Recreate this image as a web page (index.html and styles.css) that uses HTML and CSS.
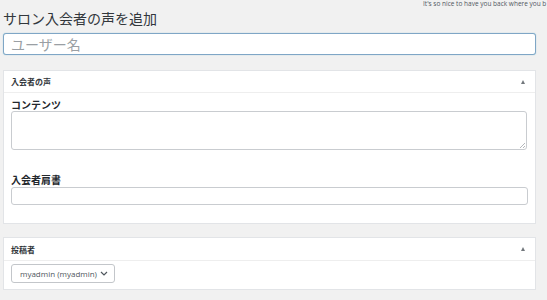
FILE: index.html
```html
<!DOCTYPE html>
<html lang="ja">
<head>
<meta charset="utf-8">
<link rel="stylesheet" href="styles.css">
</head>
<body>
<div class="note">It's so nice to have you back where you b</div>
<h1 class="title">サロン入会者の声を追加</h1>
<div class="name-field"><input class="name-input" type="text" placeholder="ユーザー名"></div>

<section class="panel panel-voice">
  <header class="panel-head">
    <span class="panel-title">入会者の声</span>
    <span class="toggle"></span>
  </header>
  <div class="panel-body">
    <label class="field-label">コンテンツ</label>
    <div class="ta-wrap"><textarea class="ta"></textarea><span class="grip"></span></div>
    <label class="field-label label-gap">入会者肩書</label>
    <input class="text-input" type="text">
  </div>
</section>

<section class="panel panel-author">
  <header class="panel-head">
    <span class="panel-title">投稿者</span>
    <span class="toggle"></span>
  </header>
  <div class="panel-body author-body">
    <div class="select">
      <span class="select-text">myadmin (myadmin)</span>
      <svg class="chev" width="8" height="5" viewBox="0 0 8 5"><path d="M1 1 L4 4 L7 1" fill="none" stroke="#50575e" stroke-width="1.2"/></svg>
    </div>
  </div>
</section>
</body>
</html>
```

FILE: styles.css
```css
* { box-sizing: border-box; }
html, body { margin: 0; padding: 0; }
body {
  background: #f1f1f1;
  font-family: "Noto Sans CJK JP", "Noto Sans", sans-serif;
  color: #23282d;
  padding: 0 11px 0 3px;
  width: 547px;
  height: 300px;
  overflow: hidden;
}
.note {
  font-family: "Open Sans", "Liberation Sans", sans-serif;
  font-size: 6.5px;
  line-height: 7px;
  height: 7px;
  color: #50575e;
  white-space: nowrap;
  padding-left: 420px;
  letter-spacing: 0;
}
.title {
  font-size: 14px;
  font-weight: 400;
  line-height: 20px;
  margin: 1px 0 0 0;
  color: #32373c;
  height: 25px;
}
.name-field { height: 22px; }
.name-input {
  display: block;
  width: 533px;
  height: 22px;
  margin: 0;
  border: 1px solid #7fa6c6;
  border-radius: 3px;
  background: #fff;
  padding: 0 7px;
  font-family: "Noto Sans CJK JP", sans-serif;
  font-size: 14px;
  outline: none;
  box-shadow: 0 0 1px rgba(30,140,190,.5);
}
.name-input::placeholder { color: #9a9fa4; }
.panel {
  background: #fff;
  border: 1px solid #e2e4e7;
  width: 533px;
}
.panel-voice { margin-top: 15px; height: 154px; }
.panel-author { margin-top: 13px; height: 53px; }
.panel-head {
  height: 22px;
  border-bottom: 1px solid #eeeeee;
  display: flex;
  align-items: center;
  justify-content: space-between;
  padding: 0 10px 0 7px;
}
.panel-author .panel-head { height: 23px; }
.panel-title {
  font-size: 8px;
  font-weight: 700;
  color: #32373c;
}
.toggle {
  width: 0; height: 0;
  border-left: 2.5px solid transparent;
  border-right: 2.5px solid transparent;
  border-bottom: 4px solid #72777c;
}
.panel-body {
  padding: 5px 8px 0 7px;
  display: flex;
  flex-direction: column;
  align-items: flex-start;
}
.field-label {
  font-size: 10px;
  font-weight: 700;
  line-height: 13px;
  height: 13px;
  color: #23282d;
}
.label-gap { margin-top: 23px; }
.ta-wrap { position: relative; width: 516px; height: 39px; }
.ta {
  display: block;
  width: 516px;
  height: 39px;
  border: 1px solid #c9ccd0;
  border-radius: 3px;
  resize: none;
  margin: 0;
  background: #fff;
}
.grip {
  position: absolute;
  right: 2px;
  bottom: 2px;
  width: 5px;
  height: 5px;
  background: linear-gradient(135deg, transparent 50%, #b5b8bc 50%, #b5b8bc 60%, transparent 60%, transparent 75%, #b5b8bc 75%, #b5b8bc 85%, transparent 85%);
}
.text-input {
  display: block;
  width: 517px;
  height: 18px;
  margin: 1px 0 0 0;
  border: 1px solid #c9ccd0;
  border-radius: 3px;
  background: #fff;
}
.author-body { padding-top: 3px; }
.select {
  width: 104px;
  height: 19px;
  border: 1px solid #c3c6ca;
  border-radius: 3px;
  display: flex;
  align-items: center;
  justify-content: space-between;
  padding: 0 6px 0 8px;
  font-family: "Open Sans", "Noto Sans", sans-serif;
  font-size: 8px;
  color: #50575e;
}
.select-text { white-space: nowrap; }
.chev { display: block; flex: none; }
```
